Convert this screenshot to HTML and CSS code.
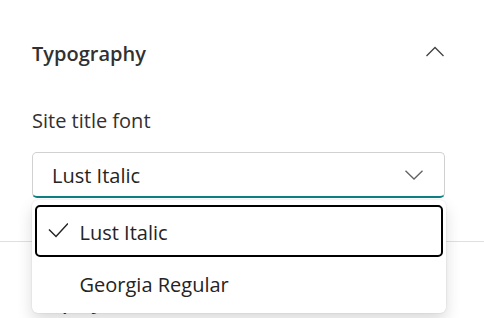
FILE: index.html
```html
<!DOCTYPE html>
<html>
<head>
    <title>Site settings</title>
    <link rel="stylesheet" href="styles.css">
</head>
<body>
    <div class="panel">
        <section class="section">
            <div class="section-header">
                <h2>Typography</h2>
                <svg class="chevron-up" width="20" height="28" viewBox="0 0 20 28">
                    <path d="M1.5 16 L10 7.5 L18.5 16" fill="none" stroke="#424242" stroke-width="1.3"/>
                </svg>
            </div>

            <div class="field-label">Site title font</div>

            <div class="dropdown">
                <div class="combobox">
                    <span class="combobox-value">Lust Italic</span>
                    <svg class="chevron-down" width="18" height="10" viewBox="0 0 18 10">
                        <path d="M0.5 0.8 L9 9 L17.5 0.8" fill="none" stroke="#616161" stroke-width="1.3"/>
                    </svg>
                </div>

                <div class="listbox">
                    <div class="option option-focused">
                        <svg class="check" width="20" height="20" viewBox="0 0 20 20">
                            <path d="M1 6.5 L8 13.5 L20 0.5" fill="none" stroke="#242424" stroke-width="1.5"/>
                        </svg>
                        <span>Lust Italic</span>
                    </div>
                    <div class="option">
                        <span>Georgia Regular</span>
                    </div>
                </div>
            </div>
        </section>

        <section class="section next">
            <div class="section-header">
                <h2>Display</h2>
            </div>
        </section>
    </div>
</body>
</html>
```

FILE: styles.css
```css
body {
    margin: 0;
    background: #ffffff;
    font-family: "Open Sans", "Noto Sans", sans-serif;
    color: #242424;
}
.panel {
    width: 484px;
    height: 318px;
    overflow: hidden;
}
.section {
    padding: 40px 39px 43px 32px;
    border-bottom: 1px solid #e0e0e0;
}
.section.next {
    padding-top: 46px;
    border-bottom: none;
}
.section-header {
    display: flex;
    justify-content: space-between;
    align-items: flex-start;
}
.section-header h2 {
    margin: 0;
    font-size: 20px;
    line-height: 28px;
    font-weight: 600;
    color: #323130;
}
.field-label {
    margin-top: 39px;
    font-size: 20px;
    line-height: 28px;
    color: #323130;
}
.dropdown {
    position: relative;
    margin-top: 17px;
}
.combobox {
    height: 46px;
    box-sizing: border-box;
    display: flex;
    align-items: center;
    justify-content: space-between;
    padding: 3px 21px 0 19px;
    border: 1px solid #d1d1d1;
    border-bottom: 2px solid #0f7f84;
    border-radius: 5px;
    font-size: 20px;
    line-height: 28px;
}
.chevron-down {
    margin-top: -3px;
}
.listbox {
    position: absolute;
    top: 48px;
    left: 0;
    width: 414px;
    box-sizing: border-box;
    padding: 5px 3px 4px 3px;
    background: #ffffff;
    border-radius: 6px;
    box-shadow: 0 0 2px rgba(0, 0, 0, 0.12), 0 8px 16px rgba(0, 0, 0, 0.14);
    z-index: 10;
}
.option {
    height: 52px;
    box-sizing: border-box;
    display: flex;
    align-items: center;
    padding: 4px 0 0 42.5px;
    border: 2.5px solid transparent;
    border-radius: 5px;
    font-size: 20px;
    line-height: 28px;
    position: relative;
}
.option-focused {
    border-color: #000000;
}
.check {
    position: absolute;
    left: 11px;
    top: 16px;
}
```
